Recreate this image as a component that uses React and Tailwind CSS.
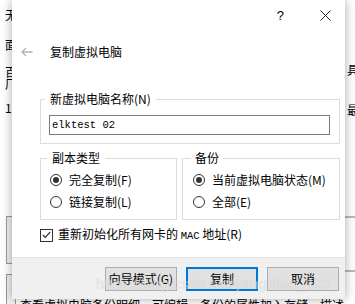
import React from 'react';

const cjk = { fontFamily: '"Noto Sans CJK SC", "Liberation Sans", sans-serif' };

const Radio = ({ checked, label }) => (
  <div className="flex items-center h-[22px] gap-[7px]">
    <span className="w-[12px] h-[12px] rounded-full border border-[#333] bg-white flex items-center justify-center shrink-0">
      {checked && <span className="w-[6px] h-[6px] rounded-full bg-[#333]" />}
    </span>
    <span className="text-[12px] leading-none text-black whitespace-nowrap">{label}</span>
  </div>
);

const Button = ({ children, primary }) => (
  <button
    className={`w-[72px] h-[24px] bg-[#e1e1e1] text-[12px] text-black leading-none flex items-center justify-center ${
      primary ? 'border-2 border-[#0078d7]' : 'border border-[#adadad]'
    }`}
  >
    {children}
  </button>
);

export default function App() {
  return (
    <div className="relative w-[355px] h-[304px] overflow-hidden bg-white" style={cjk}>
      {/* ── Background page behind the dialog ── */}
      <div className="absolute left-[5px] top-[9px] flex flex-col text-[12px] leading-none text-black">
        <span className="h-[30px]">无</span>
        <span className="h-[27px]">面</span>
        <span className="h-[12px]">百</span>
        <span className="h-[24px]">厂</span>
        <span>1</span>
      </div>
      <div className="absolute left-[6px] top-[216px] w-[10px] h-[48px] border border-[#9a9a9a] bg-[#f0f0f0]" />
      <div className="absolute left-[6px] top-[274px] w-[10px] h-[40px] border border-[#9a9a9a] bg-[#f0f0f0]" />
      <div className="absolute left-[347px] top-[64px] flex flex-col text-[12px] leading-none text-black">
        <span className="h-[40px]">具</span>
        <span>最</span>
      </div>
      <div className="absolute left-[345px] top-[216px] w-[10px] h-[2px] bg-[#b9b9b9]" />
      <div className="absolute left-[345px] top-[270px] w-[10px] h-[2px] bg-[#b9b9b9]" />
      <div className="absolute left-[20px] top-[299px] text-[12px] leading-none text-black whitespace-nowrap">
        查看虚拟电脑备份明细，可编辑，备份的属性加入存储，描述
      </div>

      {/* ── Dialog window ── */}
      <div className="absolute left-[12px] top-0 w-[333px] h-[299px] bg-white flex flex-col shadow-[0_0_10px_rgba(0,0,0,0.35)]">
        {/* Title bar */}
        <div className="h-[30px] flex items-center justify-end pr-[14px] gap-[36px] text-black">
          <span className="text-[13px] leading-none" style={{ fontFamily: '"Liberation Sans", sans-serif' }}>?</span>
          <svg width="11" height="11" viewBox="0 0 11 11" className="mt-[1px]">
            <path d="M0.5 0.5 L10.5 10.5 M10.5 0.5 L0.5 10.5" stroke="#222" strokeWidth="1" fill="none" />
          </svg>
        </div>

        {/* Header */}
        <div className="mt-[12px] h-[20px] flex items-center">
          <svg width="12" height="10" viewBox="0 0 12 10" className="ml-[9px]">
            <path d="M11.5 5 H1 M5 1 L1 5 L5 9" stroke="#b4b4b4" strokeWidth="1.3" fill="none" />
          </svg>
          <span className="ml-[17px] text-[12px] leading-none text-black">复制虚拟电脑</span>
        </div>

        {/* Content */}
        <div className="pl-[28px] pr-[5px] flex flex-col">
          <fieldset className="mt-[30px] border border-[#dcdcdc] px-[8px] pb-[8px]">
            <legend className="-ml-[4px] px-[5px] text-[12px] leading-[14px] text-black">新虚拟电脑名称(N)</legend>
            <div className="mt-[9px] h-[20px] border border-[#7a7a7a] flex items-center px-[2px] mr-[1px]">
              <span className="leading-none text-black" style={{ fontFamily: '"Liberation Mono", "Noto Sans CJK SC", monospace', fontSize: '10.5px' }}>
                elktest 02
              </span>
            </div>
          </fieldset>

          <div className="mt-[7px] flex gap-[5px]">
            <fieldset className="w-[137px] border border-[#dcdcdc] pl-[9px] pb-[6px]">
              <legend className="-ml-[3px] px-[5px] text-[12px] leading-[14px] text-black">副本类型</legend>
              <div className="mt-[4px]">
                <Radio checked label="完全复制(F)" />
                <Radio label="链接复制(L)" />
              </div>
            </fieldset>
            <fieldset className="flex-1 border border-[#dcdcdc] pl-[10px] pb-[6px]">
              <legend className="-ml-[2px] px-[4px] text-[12px] leading-[14px] text-black">备份</legend>
              <div className="mt-[4px]">
                <Radio checked label="当前虚拟电脑状态(M)" />
                <Radio label="全部(E)" />
              </div>
            </fieldset>
          </div>

          <div className="mt-[8px] h-[14px] flex items-center gap-[5px]">
            <span className="w-[13px] h-[13px] border border-[#333] bg-white flex items-center justify-center shrink-0">
              <svg width="9" height="8" viewBox="0 0 9 8">
                <path d="M0.8 4 L3.3 6.5 L8.2 1" stroke="#333" strokeWidth="1.2" fill="none" />
              </svg>
            </span>
            <span className="text-[12px] leading-none text-black whitespace-nowrap">
              重新初始化所有网卡的 <span style={{ fontFamily: '"Liberation Mono", monospace', fontSize: '10.5px' }}>MAC</span> 地址(R)
            </span>
          </div>
        </div>

        {/* Footer */}
        <div className="mt-auto h-[42px] bg-[#f0f0f0] border-t border-[#e3e3e3] flex items-start justify-end pt-[9px] pr-[6px] gap-[9px]">
          <Button>向导模式(G)</Button>
          <Button primary>复制</Button>
          <Button>取消</Button>
        </div>
      </div>

      {/* Watermark */}
      <div
        className="absolute left-[96px] top-[276px] text-[15px] leading-none text-white/60 whitespace-nowrap pointer-events-none"
        style={{ fontFamily: '"Liberation Sans", sans-serif', textShadow: '0 0 1px rgba(0,0,0,0.2)' }}
      >
        https://blog.csdn.net/yanglitian_123
      </div>
    </div>
  );
}
